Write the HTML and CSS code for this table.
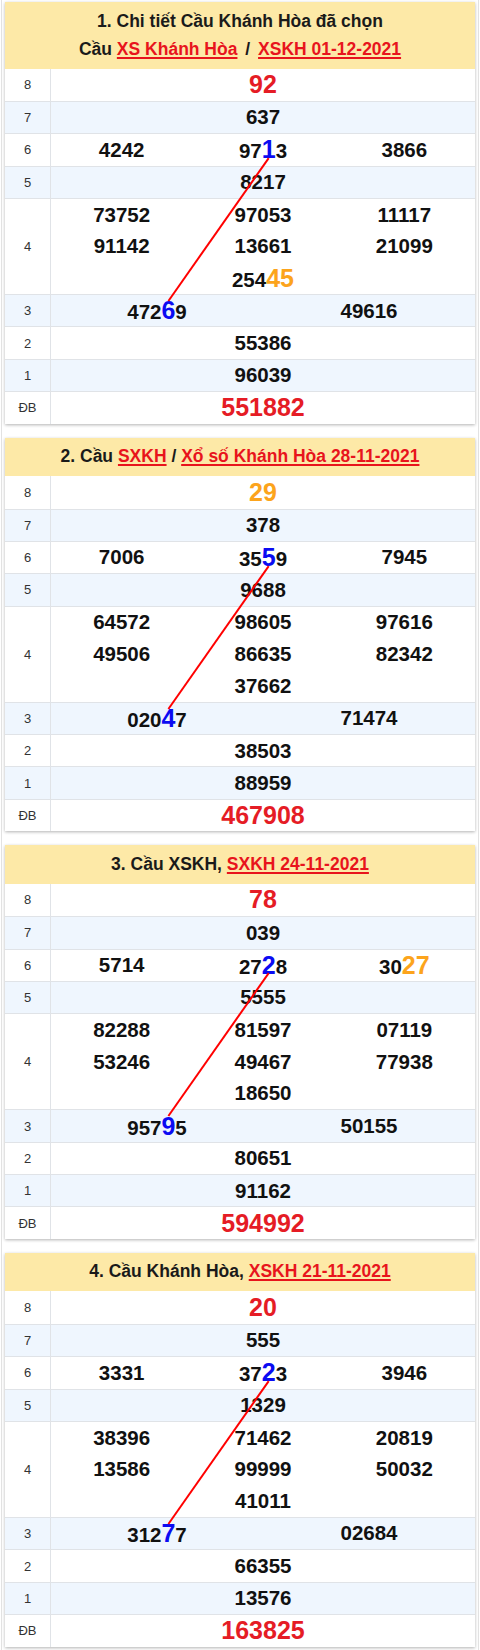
FILE: index.html
```html
<!DOCTYPE html>
<html lang="vi">
<head>
<meta charset="utf-8">
<title>Cầu Khánh Hòa</title>
<link rel="stylesheet" href="styles.css">
</head>
<body>
<div class="page">

<section class="card">
  <header class="card-head">
    <div>1. Chi tiết Cầu Khánh Hòa đã chọn</div>
    <div>Cầu <a href="#">XS Khánh Hòa</a> <span class="sep">/</span> <a href="#">XSKH 01-12-2021</a></div>
  </header>
  <div class="row"><div class="lbl">8</div><div class="vals"><span class="big red">92</span></div></div>
  <div class="row"><div class="lbl">7</div><div class="vals"><span>637</span></div></div>
  <div class="row"><div class="lbl">6</div><div class="vals c3"><span>4242</span><span>97<b class="hl blue from">1</b>3</span><span>3866</span></div></div>
  <div class="row"><div class="lbl">5</div><div class="vals"><span>8217</span></div></div>
  <div class="row r4"><div class="lbl">4</div><div class="vals c3"><span>73752</span><span>97053</span><span>11117</span><span>91142</span><span>13661</span><span>21099</span><span></span><span>254<b class="hl orange">45</b></span><span></span></div></div>
  <div class="row"><div class="lbl">3</div><div class="vals c2"><span>472<b class="hl blue to">6</b>9</span><span>49616</span></div></div>
  <div class="row"><div class="lbl">2</div><div class="vals"><span>55386</span></div></div>
  <div class="row"><div class="lbl">1</div><div class="vals"><span>96039</span></div></div>
  <div class="row"><div class="lbl">ĐB</div><div class="vals"><span class="big red">551882</span></div></div>
  <svg class="bridge"><line x1="0" y1="0" x2="0" y2="0"/></svg>
</section>

<section class="card">
  <header class="card-head">
    <div>2. Cầu <a href="#">SXKH</a> / <a href="#">Xổ số Khánh Hòa 28-11-2021</a></div>
  </header>
  <div class="row"><div class="lbl">8</div><div class="vals"><span class="big orange">29</span></div></div>
  <div class="row"><div class="lbl">7</div><div class="vals"><span>378</span></div></div>
  <div class="row"><div class="lbl">6</div><div class="vals c3"><span>7006</span><span>35<b class="hl blue from">5</b>9</span><span>7945</span></div></div>
  <div class="row"><div class="lbl">5</div><div class="vals"><span>9688</span></div></div>
  <div class="row r4"><div class="lbl">4</div><div class="vals c3"><span>64572</span><span>98605</span><span>97616</span><span>49506</span><span>86635</span><span>82342</span><span></span><span>37662</span><span></span></div></div>
  <div class="row"><div class="lbl">3</div><div class="vals c2"><span>020<b class="hl blue to">4</b>7</span><span>71474</span></div></div>
  <div class="row"><div class="lbl">2</div><div class="vals"><span>38503</span></div></div>
  <div class="row"><div class="lbl">1</div><div class="vals"><span>88959</span></div></div>
  <div class="row"><div class="lbl">ĐB</div><div class="vals"><span class="big red">467908</span></div></div>
  <svg class="bridge"><line x1="0" y1="0" x2="0" y2="0"/></svg>
</section>

<section class="card">
  <header class="card-head">
    <div>3. Cầu XSKH, <a href="#">SXKH 24-11-2021</a></div>
  </header>
  <div class="row"><div class="lbl">8</div><div class="vals"><span class="big red">78</span></div></div>
  <div class="row"><div class="lbl">7</div><div class="vals"><span>039</span></div></div>
  <div class="row"><div class="lbl">6</div><div class="vals c3"><span>5714</span><span>27<b class="hl blue from">2</b>8</span><span>30<b class="hl orange">27</b></span></div></div>
  <div class="row"><div class="lbl">5</div><div class="vals"><span>5555</span></div></div>
  <div class="row r4"><div class="lbl">4</div><div class="vals c3"><span>82288</span><span>81597</span><span>07119</span><span>53246</span><span>49467</span><span>77938</span><span></span><span>18650</span><span></span></div></div>
  <div class="row"><div class="lbl">3</div><div class="vals c2"><span>957<b class="hl blue to">9</b>5</span><span>50155</span></div></div>
  <div class="row"><div class="lbl">2</div><div class="vals"><span>80651</span></div></div>
  <div class="row"><div class="lbl">1</div><div class="vals"><span>91162</span></div></div>
  <div class="row"><div class="lbl">ĐB</div><div class="vals"><span class="big red">594992</span></div></div>
  <svg class="bridge"><line x1="0" y1="0" x2="0" y2="0"/></svg>
</section>

<section class="card">
  <header class="card-head">
    <div>4. Cầu Khánh Hòa, <a href="#">XSKH 21-11-2021</a></div>
  </header>
  <div class="row"><div class="lbl">8</div><div class="vals"><span class="big red">20</span></div></div>
  <div class="row"><div class="lbl">7</div><div class="vals"><span>555</span></div></div>
  <div class="row"><div class="lbl">6</div><div class="vals c3"><span>3331</span><span>37<b class="hl blue from">2</b>3</span><span>3946</span></div></div>
  <div class="row"><div class="lbl">5</div><div class="vals"><span>1329</span></div></div>
  <div class="row r4"><div class="lbl">4</div><div class="vals c3"><span>38396</span><span>71462</span><span>20819</span><span>13586</span><span>99999</span><span>50032</span><span></span><span>41011</span><span></span></div></div>
  <div class="row"><div class="lbl">3</div><div class="vals c2"><span>312<b class="hl blue to">7</b>7</span><span>02684</span></div></div>
  <div class="row"><div class="lbl">2</div><div class="vals"><span>66355</span></div></div>
  <div class="row"><div class="lbl">1</div><div class="vals"><span>13576</span></div></div>
  <div class="row"><div class="lbl">ĐB</div><div class="vals"><span class="big red">163825</span></div></div>
  <svg class="bridge"><line x1="0" y1="0" x2="0" y2="0"/></svg>
</section>

</div>
<script src="script.js"></script>
</body>
</html>
```

FILE: styles.css
```css
html, body {
  margin: 0;
  padding: 0;
  background: #ffffff;
}

body {
  font-family: "Liberation Sans", Arial, sans-serif;
  color: #111111;
}

.page {
  margin: 0 1px;
  padding: 2px 3px 4px;
  border-left: 1px solid #e2e2e2;
  border-right: 1px solid #e2e2e2;
  display: flex;
  flex-direction: column;
  gap: 14px;
}

.card {
  position: relative;
  background: #ffffff;
  box-shadow: 0 1px 3px rgba(0, 0, 0, 0.3);
}

.card-head {
  background: #fde9a7;
  text-align: center;
  font-weight: bold;
  font-size: 17.5px;
  line-height: 28px;
  padding: 4.5px 6px 6px;
  color: #1a1a1a;
}

.card-head a {
  color: #e8141c;
  text-decoration: underline;
  text-decoration-thickness: 1.5px;
  text-underline-offset: 2px;
}

.card-head .sep {
  margin: 0 3px;
}

.row {
  display: grid;
  grid-template-columns: 46px 1fr;
  height: 32.4px;
  box-sizing: border-box;
  border-top: 1px solid #e0e3e7;
}

.card-head + .row {
  border-top: none;
  height: 32.4px;
}

.row:nth-child(odd) {
  background: #eff6fe;
}

.row.r4 {
  height: 96px;
}

.lbl {
  display: flex;
  align-items: center;
  justify-content: center;
  border-right: 1px solid #e0e3e7;
  font-size: 13px;
  color: #333333;
}

.vals {
  display: grid;
  grid-template-columns: 1fr;
  align-items: center;
  justify-items: center;
  font-weight: bold;
  font-size: 20.5px;
  line-height: 1;
  color: #111111;
}

.vals.c3 {
  grid-template-columns: repeat(3, 1fr);
}

.vals.c2 {
  grid-template-columns: repeat(2, 1fr);
}

.r4 .vals {
  grid-template-rows: repeat(3, 1fr);
}

.big {
  font-size: 25px;
}

.hl {
  font-size: 25px;
  font-weight: bold;
}

.red {
  color: #e51c25;
}

.orange {
  color: #fca41c;
}

.blue {
  color: #0b0bf2;
}

.bridge {
  position: absolute;
  left: 0;
  top: 0;
  width: 100%;
  height: 100%;
  pointer-events: none;
  overflow: visible;
}

.bridge line {
  stroke: #ff0000;
  stroke-width: 2;
}
```

FILE: script.js
```js
document.querySelectorAll('.card').forEach(function (card) {
  var a = card.querySelector('.from');
  var b = card.querySelector('.to');
  var line = card.querySelector('.bridge line');
  if (!a || !b || !line) return;
  var c = card.getBoundingClientRect();
  var ra = a.getBoundingClientRect();
  var rb = b.getBoundingClientRect();
  var fa = parseFloat(getComputedStyle(a).fontSize);
  var fb = parseFloat(getComputedStyle(b).fontSize);
  var x1 = ra.left + ra.width / 2 - c.left;
  var y1 = ra.top + 0.905 * fa - c.top;
  var x2 = rb.left + rb.width / 2 - c.left;
  var y2 = rb.top + 0.19 * fb - c.top;
  line.setAttribute('x1', x1);
  line.setAttribute('y1', y1);
  line.setAttribute('x2', x2);
  line.setAttribute('y2', y2);
});
```
